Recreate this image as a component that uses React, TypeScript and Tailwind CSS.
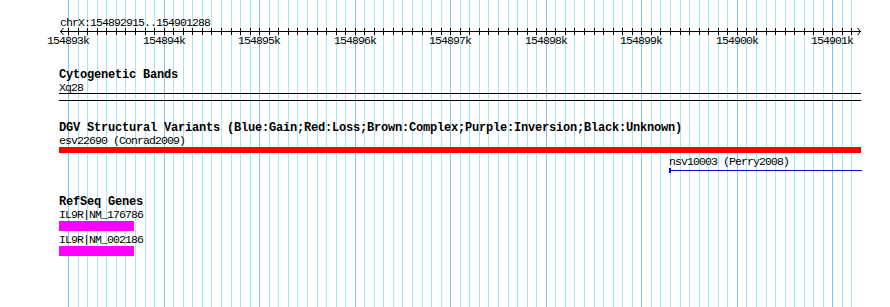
import React from 'react';

// region shown: chrX:154892915..154901288, drawn 800px wide from x=60
const START = 154892915;
const END = 154901288;
const BP_PER_PX = (END - START + 1) / 800;
const toX = (bp: number) => Math.round(60 + (bp - START) / BP_PER_PX);

const gridStops: number[] = [];
for (let bp = Math.ceil(START / 100) * 100; bp <= END; bp += 100) gridStops.push(bp);
const majors = gridStops.filter(bp => bp % 1000 === 0);

const mono = "font-['Liberation_Mono','DejaVu_Sans_Mono',monospace]";
const small = `${mono} text-[11.5px] tracking-[-0.9px] text-black whitespace-nowrap`;
const title = `${mono} text-[12px] font-bold tracking-[-0.2px] leading-[13px] text-black whitespace-nowrap`;

function Grid() {
  return (
    <svg className="absolute inset-0" width={890} height={307}>
      {gridStops.map(bp => (
        <line
          key={bp}
          x1={toX(bp) + 0.5}
          x2={toX(bp) + 0.5}
          y1={0}
          y2={307}
          stroke={bp % 1000 === 0 ? '#86c4ea' : '#abe5f0'}
          strokeWidth={1}
        />
      ))}
      {/* ruler axis */}
      <line x1={60} x2={861} y1={31.5} y2={31.5} stroke="#000" />
      <path d="M63.5 28 L60.5 31.5 L63.5 35" fill="none" stroke="#000" />
      <path d="M857.5 28 L860.5 31.5 L857.5 35" fill="none" stroke="#000" />
      {gridStops.map(bp => (
        <line key={'t' + bp} x1={toX(bp) + 0.5} x2={toX(bp) + 0.5} y1={28} y2={35} stroke="#000" />
      ))}
    </svg>
  );
}

export default function App() {
  return (
    <div className="relative w-[890px] h-[307px] bg-white overflow-hidden">
      <Grid />

      <div className="relative pl-[59px]">
        {/* ruler */}
        <div className="relative h-[69px]">
          <div className={`${small} leading-[13px] pt-[16px] pl-[1px]`}>chrX:154892915..154901288</div>
          {majors.map(bp => (
            <div
              key={bp}
              className={`${small} leading-[11px] absolute top-[35px]`}
              style={{ left: toX(bp) - 59 - 21 }}
            >
              {Math.round(bp / 1000)}k
            </div>
          ))}
        </div>

        {/* cytogenetic bands */}
        <div className="w-[802px]">
          <div className={title}>Cytogenetic Bands</div>
          <div className={`${small} leading-[11px]`}>Xq28</div>
          <div className="h-[8px] border-y border-black" />
        </div>

        {/* DGV */}
        <div className="w-[802px] mt-[21px]">
          <div className={title}>DGV Structural Variants (Blue:Gain;Red:Loss;Brown:Complex;Purple:Inversion;Black:Unknown)</div>
          <div className={`${small} leading-[12px]`}>esv22690 (Conrad2009)</div>
          <div className="h-[6px] bg-[#ff0000]" />
          <div className="ml-[610px] w-[193px] mt-[3px]">
            <div className={`${small} leading-[12px]`}>nsv10003 (Perry2008)</div>
            <div className="flex items-center h-[5px]">
              <div className="w-[2px] h-[5px] bg-[#0000ff]" />
              <div className="flex-1 h-px bg-[#0000ff]" />
            </div>
          </div>
        </div>

        {/* RefSeq */}
        <div className="mt-[23px]">
          <div className={title}>RefSeq Genes</div>
          <div className={`${small} leading-[12px]`}>IL9R|NM_176786</div>
          <div className="w-[75px] h-[10px] bg-[#ff00ff]" />
          <div className={`${small} leading-[12px] mt-[3px]`}>IL9R|NM_002186</div>
          <div className="w-[75px] h-[10px] bg-[#ff00ff]" />
        </div>
      </div>
    </div>
  );
}
